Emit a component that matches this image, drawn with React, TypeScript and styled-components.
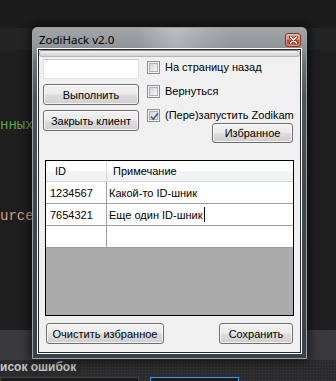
import { Fragment } from 'react'
import styled, { createGlobalStyle } from 'styled-components'

const GlobalStyle = createGlobalStyle`
  html, body {
    margin: 0;
    padding: 0;
    background: #1c1c1c;
  }
  body {
    width: 336px;
    height: 381px;
    overflow: hidden;
  }
`

// background IDE layer
const Desktop = styled.div`
  position: relative;
  width: 336px;
  height: 381px;
  display: flex;
  flex-direction: column;
  overflow: hidden;
  background: #1c1c1c;
`

const Band = styled.div<{ $h: number; $bg: string }>`
  height: ${p => p.$h}px;
  flex-shrink: 0;
  background: ${p => p.$bg};
`

const CodeArea = styled.div`
  flex: 1;
  background: #1e1e1e;
  padding-top: 67px;
  font-family: "Liberation Mono", "DejaVu Sans Mono", monospace;
  font-size: 14px;
  line-height: 16px;
`

const CodeLine = styled.div<{ $color: string; $gap?: number }>`
  color: ${p => p.$color};
  margin-top: ${p => p.$gap ?? 0}px;
  white-space: pre;
`

const ErrorHeader = styled.div`
  height: 21px;
  flex-shrink: 0;
  background-color: #2b2b2d;
  background-image: radial-gradient(#3a3a3c 0.8px, transparent 0.9px);
  background-size: 3px 3px;
  font-family: "Liberation Sans", Arial, sans-serif;
  font-weight: bold;
  font-size: 12px;
  color: #c6c6c6;
  line-height: 15px;
`

const ErrorTitle = styled.span`
  background: #2b2b2d;
  padding-right: 4px;
`

const ToolRow = styled.div`
  display: flex;
  gap: 11px;
  height: 4px;
  margin-top: 2px;
`

const ToolBox = styled.div<{ $w: number; $active?: boolean }>`
  width: ${p => p.$w}px;
  background: #1b1b1c;
  border: 1px solid ${p => (p.$active ? '#3399ff' : '#3f3f46')};
  border-bottom: none;
`

// the dialog window
const Window = styled.div`
  position: absolute;
  left: 32px;
  top: 27px;
  width: 275px;
  height: 332px;
  box-sizing: border-box;
  border: 1px solid #9aa2a8;
  border-radius: 5px 5px 0 0;
  padding: 0 4px 4px 4px;
  display: flex;
  flex-direction: column;
  background: linear-gradient(180deg, #a2a6a9 0px, #8f9498 20px, #6a7278 34px, #4a555d 70px, #3d4850 160px, #37424a 100%);
  box-shadow: 0 0 10px 3px rgba(0, 0, 0, 0.55);
`

const TitleBar = styled.div`
  height: 20px;
  margin: 0 -4px;
  padding: 0 5px 0 6px;
  display: flex;
  align-items: center;
  justify-content: space-between;
  background: linear-gradient(90deg, rgba(255,255,255,0) 0%, rgba(255,255,255,0) 38%, rgba(255,255,255,0.28) 52%, rgba(255,255,255,0.12) 62%, rgba(255,255,255,0) 72%);
`

const TitleText = styled.span`
  font-family: "Noto Sans", "Open Sans", sans-serif;
  font-size: 11.5px;
  color: #000;
  margin-top: 3px;
`

const CloseButton = styled.div`
  width: 16px;
  height: 14px;
  box-sizing: border-box;
  margin-top: 4px;
  border: 1px solid #6b3b30;
  border-radius: 3px;
  background: linear-gradient(180deg, #e9a996 0%, #d9846c 45%, #c3462a 55%, #d0603e 100%);
  box-shadow: inset 0 0 0 1px rgba(255, 220, 210, 0.45);
  display: flex;
  align-items: center;
  justify-content: center;
`

const ClientEdge = styled.div`
  flex: 1;
  display: flex;
  border: 1px solid #ffffff;
`

const Client = styled.div`
  flex: 1;
  display: flex;
  flex-direction: column;
  border: 1px solid #2a2a2a;
  background: #f0f0f0;
  font-family: "Liberation Sans", Arial, sans-serif;
  font-size: 11px;
  color: #000;
`

const Strip = styled.div`
  height: 7px;
  box-sizing: border-box;
  border: 1px solid #b4b6b8;
  border-top-color: #8c8e90;
  border-radius: 3px;
  background: linear-gradient(180deg, #f4f4f4 0%, #e2e2e2 50%, #cfd0d1 100%);
`

const Top = styled.div`
  display: flex;
`

const LeftCol = styled.div`
  width: 96px;
  margin-left: 4px;
  padding-top: 2px;
  display: flex;
  flex-direction: column;
  gap: 5px;
`

const TextBox = styled.div`
  height: 20px;
  box-sizing: border-box;
  background: #fff;
  border: 1px solid #e0e3e8;
  border-top-color: #c3c7cd;
`

const Button = styled.div<{ $w?: number; $h?: number }>`
  width: ${p => (p.$w ? `${p.$w}px` : 'auto')};
  height: ${p => p.$h ?? 21}px;
  box-sizing: border-box;
  border: 1px solid #707070;
  border-radius: 3px;
  background: linear-gradient(180deg, #f2f2f2 0%, #ebebeb 48%, #dddddd 52%, #cfcfcf 100%);
  box-shadow: inset 0 0 0 1px rgba(255, 255, 255, 0.7);
  display: flex;
  align-items: center;
  justify-content: center;
  white-space: nowrap;
`

const RightCol = styled.div`
  flex: 1;
  margin-left: 8px;
  display: flex;
  flex-direction: column;
  gap: 4px;
`

const CheckRow = styled.div`
  height: 20px;
  display: flex;
  align-items: center;
  gap: 5px;
`

const Box = styled.div`
  width: 13px;
  height: 13px;
  box-sizing: border-box;
  border: 1px solid #8e8f8f;
  padding: 1px;
  background: #f4f4f4;
  position: relative;
`

const BoxFill = styled.div`
  width: 100%;
  height: 100%;
  background: linear-gradient(135deg, #cfd2d6 0%, #e6e7e9 50%, #f7f7f7 100%);
  border: 1px solid #aeb2b8;
  box-sizing: border-box;
`

const CheckMark = styled.svg`
  position: absolute;
  left: 0;
  top: 0;
`

const FavRow = styled.div`
  display: flex;
  justify-content: flex-end;
  margin-top: -6px;
  margin-right: 7px;
`

const Grid = styled.div`
  margin: 17px 6px 0 6px;
  height: 156px;
  box-sizing: border-box;
  border: 1px solid #000;
  display: flex;
  flex-direction: column;
`

const Rows = styled.div`
  display: grid;
  grid-template-columns: 61px 1fr;
`

const HeadCell = styled.div<{ $pad: number; $last?: boolean }>`
  height: 21px;
  box-sizing: border-box;
  padding-left: ${p => p.$pad}px;
  display: flex;
  align-items: center;
  background: linear-gradient(180deg, #ffffff 0%, #ffffff 45%, #f3f4f6 55%, #eef0f3 100%);
  border-bottom: 1px solid #d5d5d5;
  border-right: ${p => (p.$last ? 'none' : '1px solid #d8d8d8')};
`

const Cell = styled.div<{ $pad: number; $last?: boolean }>`
  height: 22px;
  box-sizing: border-box;
  padding-left: ${p => p.$pad}px;
  display: flex;
  align-items: center;
  background: #fff;
  border-bottom: 1px solid #a0a0a0;
  border-right: ${p => (p.$last ? 'none' : '1px solid #a0a0a0')};
`

const Caret = styled.span`
  display: inline-block;
  width: 1px;
  height: 15px;
  background: #000;
  margin-left: 1px;
`

const Empty = styled.div`
  flex: 1;
  background: #ababab;
`

const BottomBar = styled.div`
  display: flex;
  justify-content: space-between;
  margin: 7px 7px 0 7px;
`

const rows = [
  { id: '1234567', note: 'Какой-то ID-шник' },
  { id: '7654321', note: 'Еще один ID-шник', editing: true },
  { id: '', note: '' },
]

const Check: React.FC<{ checked?: boolean; label: string }> = ({ checked, label }) => (
  <CheckRow>
    <Box>
      <BoxFill />
      {checked && (
        <CheckMark width="13" height="13" viewBox="0 0 13 13">
          <path d="M3 6.5 L5.3 9.2 L10 3.2" fill="none" stroke="#3f5a94" strokeWidth="1.7" />
        </CheckMark>
      )}
    </Box>
    <span>{label}</span>
  </CheckRow>
)

export default function App() {
  return (
    <>
      <GlobalStyle />
      <Desktop>
        <Band $h={28} $bg="#1c1c1c" />
        <Band $h={22} $bg="#242424" />
        <CodeArea>
          <CodeLine $color="#57a64a">нных</CodeLine>
          <CodeLine $color="#d69d85" $gap={75}>urce</CodeLine>
        </CodeArea>
        <Band $h={30} $bg="#3a3a3c" />
        <ErrorHeader>
          <ErrorTitle>исок ошибок</ErrorTitle>
          <ToolRow>
            <ToolBox $w={137} />
            <ToolBox $w={87} $active />
          </ToolRow>
        </ErrorHeader>

        <Window>
          <TitleBar>
            <TitleText>ZodiHack v2.0</TitleText>
            <CloseButton>
              <svg width="9" height="8" viewBox="0 0 9 8">
                <path d="M1.5 1 L7.5 7 M7.5 1 L1.5 7" stroke="#5a2a20" strokeWidth="3" strokeLinecap="round" />
                <path d="M1.5 1 L7.5 7 M7.5 1 L1.5 7" stroke="#ffffff" strokeWidth="1.6" strokeLinecap="round" />
              </svg>
            </CloseButton>
          </TitleBar>
          <ClientEdge>
            <Client>
              <Strip />
              <Top>
                <LeftCol>
                  <TextBox />
                  <Button>Выполнить</Button>
                  <Button>Закрыть клиент</Button>
                </LeftCol>
                <RightCol>
                  <Check label="На страницу назад" />
                  <Check label="Вернуться" />
                  <Check checked label="(Пере)запустить Zodikam" />
                  <FavRow>
                    <Button $w={81} $h={20}>Избранное</Button>
                  </FavRow>
                </RightCol>
              </Top>
              <Grid>
                <Rows>
                  <HeadCell $pad={9}>ID</HeadCell>
                  <HeadCell $pad={6} $last>Примечание</HeadCell>
                  {rows.map((r, i) => (
                    <Fragment key={i}>
                      <Cell $pad={4}>{r.id}</Cell>
                      <Cell $pad={2} $last>
                        {r.note}
                        {r.editing && <Caret />}
                      </Cell>
                    </Fragment>
                  ))}
                </Rows>
                <Empty />
              </Grid>
              <BottomBar>
                <Button $w={118}>Очистить избранное</Button>
                <Button $w={74}>Сохранить</Button>
              </BottomBar>
            </Client>
          </ClientEdge>
        </Window>
      </Desktop>
    </>
  )
}
